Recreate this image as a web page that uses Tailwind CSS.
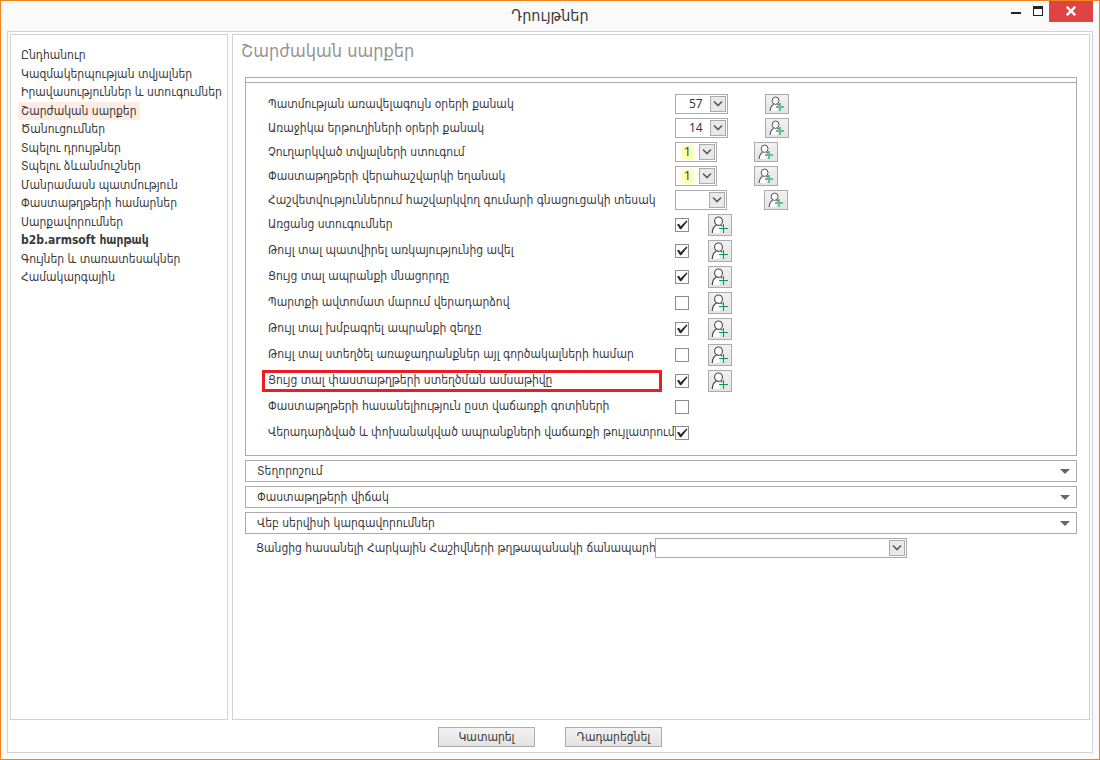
<!DOCTYPE html>
<html lang="hy">
<head>
<meta charset="utf-8">
<title>Դրույթներ</title>
<script src="https://cdn.jsdelivr.net/npm/@tailwindcss/browser@4"></script>
</head>
<body class="flex min-h-screen flex-col border border-[#f58220] bg-[#fafafa] font-['DejaVu_Sans_Condensed','DejaVu_Sans',sans-serif] text-[12px] leading-[18px] text-[#3a3a3a]">

<svg class="hidden" aria-hidden="true">
  <symbol id="user-add" viewBox="0 0 18 18">
    <path d="M1 17C1 14 2.500 10.800 5.400 9.200C7 10 8.200 10 9.800 9.200L12 11V13H9V17Z" fill="#fff"/>
    <ellipse cx="7.500" cy="5.200" rx="3.900" ry="4.200" fill="#fff" stroke="#4a4a4a" stroke-width="1.100"/>
    <path d="M1.300 17C1.300 13.500 2.600 10.700 5.400 9.100M9.600 9.100L11.400 10.200" fill="none" stroke="#4a4a4a" stroke-width="1.200"/>
    <path d="M12 8h1v4h4v1h-4v4h-1v-4h-4v-1h4z" fill="#00a046"/>
  </symbol>
  <symbol id="user-add-small" viewBox="0 0 16 16">
    <path d="M1 15C1 12 2.200 9.600 4.700 8.300C6 9 7.300 9 8.600 8.300L10.500 10V11H8V15Z" fill="#fff"/>
    <ellipse cx="6.600" cy="4.700" rx="3.400" ry="3.700" fill="#fff" stroke="#555" stroke-width="1"/>
    <path d="M1.200 15C1.200 12 2.300 9.600 4.700 8.200M8.500 8.200L10 9.200" fill="none" stroke="#555" stroke-width="1.100"/>
    <path d="M11 7v8M7 11h8" fill="none" stroke="#66c08c" stroke-width="2"/>
  </symbol>
  <symbol id="chevron" viewBox="0 0 14 14">
    <path d="M3 4.500L7 8.500L11 4.500" fill="none" stroke="#5c5c5c" stroke-width="1.600"/>
  </symbol>
  <symbol id="tick" viewBox="0 0 12 12">
    <path d="M1 5.500L3 4.800L4.600 7.200L10.800 1.200L11.400 2.400L5.200 10.300H4Z" fill="#2b2b2b"/>
  </symbol>
</svg>

<header class="relative flex h-[30px] items-center justify-center">
  <h1 class="text-[16px] leading-[20px]">Դրույթներ</h1>
  <div class="absolute -top-px right-[6px] flex items-start">
    <button aria-label="Minimize" class="flex h-[22px] w-[22px] items-center justify-center"><svg class="h-[10px] w-[10px]" viewBox="0 0 10 10"><path d="M0 6h10v2H0z" fill="#222"/></svg></button>
    <button aria-label="Maximize" class="flex h-[22px] w-[22px] items-center justify-center"><svg class="h-[10px] w-[10px]" viewBox="0 0 10 10"><path d="M0 0h10v10H0zM1 3v6h8V3z" fill="#222" fill-rule="evenodd"/></svg></button>
    <button aria-label="Close" class="flex h-[22px] w-[44px] items-center justify-center bg-[#e04343]"><svg class="h-[10px] w-[10px]" viewBox="0 0 10 10"><path d="M.800 .800L9.200 9.200M9.200 .800L.800 9.200" stroke="#fff" stroke-width="2.400"/></svg></button>
  </div>
</header>

<div class="mx-[6px] mb-[6px] flex grow flex-col border border-[#d2d2d2] bg-white">
  <div class="flex grow gap-1 px-[2px] pt-[2px]">

    <nav class="w-[218px] shrink-0 border border-[#d2d2d2] pt-[11px]">
      <ul class="grid h-[241px] auto-rows-fr pl-[7px]">
        <li><a href="#" class="inline-block whitespace-nowrap px-[3px]">Ընդհանուր</a></li>
        <li><a href="#" class="inline-block whitespace-nowrap px-[3px]">Կազմակերպության տվյալներ</a></li>
        <li><a href="#" class="inline-block whitespace-nowrap px-[3px]">Իրավասություններ և ստուգումներ</a></li>
        <li><a href="#" class="inline-block whitespace-nowrap bg-[#fcece3] px-[3px]">Շարժական սարքեր</a></li>
        <li><a href="#" class="inline-block whitespace-nowrap px-[3px]">Ծանուցումներ</a></li>
        <li><a href="#" class="inline-block whitespace-nowrap px-[3px]">Տպելու դրույթներ</a></li>
        <li><a href="#" class="inline-block whitespace-nowrap px-[3px]">Տպելու ձևանմուշներ</a></li>
        <li><a href="#" class="inline-block whitespace-nowrap px-[3px]">Մանրամասն պատմություն</a></li>
        <li><a href="#" class="inline-block whitespace-nowrap px-[3px]">Փաստաթղթերի համարներ</a></li>
        <li><a href="#" class="inline-block whitespace-nowrap px-[3px]">Սարքավորումներ</a></li>
        <li><a href="#" class="inline-block whitespace-nowrap px-[3px] font-bold">b2b.armsoft հարթակ</a></li>
        <li><a href="#" class="inline-block whitespace-nowrap px-[3px]">Գույներ և տառատեսակներ</a></li>
        <li><a href="#" class="inline-block whitespace-nowrap px-[3px]">Համակարգային</a></li>
      </ul>
    </nav>

    <main class="grow border border-[#d2d2d2]">
      <h2 class="px-2 pt-1 text-[18px] leading-6 text-[#949494]">Շարժական սարքեր</h2>

      <div class="mx-3 mt-[14px] flex flex-col gap-1">
        <section class="border border-[#ababab]">
          <div class="h-[5px] border-b border-[#ababab]"></div>
          <div class="pt-[9px] pb-[9px] pl-[22px]">
            <div class="flex h-6 items-center">
              <label for="s1" class="w-[407px]">Պատմության առավելագույն օրերի քանակ</label>
              <span class="relative flex"><select id="s1" class="h-5 w-[53px] appearance-none border border-[#ababab] bg-white pl-[13px] font-['Noto_Sans',sans-serif] text-[12px] leading-4"><option>57</option></select><svg class="pointer-events-none absolute top-[2px] right-[2px] h-4 w-4 border border-[#ababab] bg-[#e9e9e9]"><use href="#chevron"/></svg></span>
              <button aria-label="Ավելացնել օգտատեր" class="ml-[37px] flex h-5 w-6 items-center justify-center border border-[#ababab] bg-linear-to-b from-[#f2f2f2] to-[#e2e2e2]"><svg class="h-4 w-4"><use href="#user-add-small"/></svg></button>
            </div>
            <div class="flex h-6 items-center">
              <label for="s2" class="w-[407px]">Առաջիկա երթուղիների օրերի քանակ</label>
              <span class="relative flex"><select id="s2" class="h-5 w-[53px] appearance-none border border-[#ababab] bg-white pl-[13px] font-['Noto_Sans',sans-serif] text-[12px] leading-4"><option>14</option></select><svg class="pointer-events-none absolute top-[2px] right-[2px] h-4 w-4 border border-[#ababab] bg-[#e9e9e9]"><use href="#chevron"/></svg></span>
              <button aria-label="Ավելացնել օգտատեր" class="ml-[37px] flex h-5 w-6 items-center justify-center border border-[#ababab] bg-linear-to-b from-[#f2f2f2] to-[#e2e2e2]"><svg class="h-4 w-4"><use href="#user-add-small"/></svg></button>
            </div>
            <div class="flex h-6 items-center">
              <label for="s3" class="w-[407px]">Չուղարկված տվյալների ստուգում</label>
              <span class="relative flex"><select id="s3" class="h-5 w-[42px] appearance-none border border-[#ababab] bg-white bg-[linear-gradient(#ffffb0,#ffffb0)] bg-[length:11px_14px] bg-[position:6px_2px] bg-no-repeat pl-2 font-['Noto_Sans',sans-serif] text-[12px] leading-4"><option>1</option></select><svg class="pointer-events-none absolute top-[2px] right-[2px] h-4 w-4 border border-[#ababab] bg-[#e9e9e9]"><use href="#chevron"/></svg></span>
              <button aria-label="Ավելացնել օգտատեր" class="ml-[37px] flex h-5 w-6 items-center justify-center border border-[#ababab] bg-linear-to-b from-[#f2f2f2] to-[#e2e2e2]"><svg class="h-4 w-4"><use href="#user-add-small"/></svg></button>
            </div>
            <div class="flex h-6 items-center">
              <label for="s4" class="w-[407px]">Փաստաթղթերի վերահաշվարկի եղանակ</label>
              <span class="relative flex"><select id="s4" class="h-5 w-[42px] appearance-none border border-[#ababab] bg-white bg-[linear-gradient(#ffffb0,#ffffb0)] bg-[length:11px_14px] bg-[position:6px_2px] bg-no-repeat pl-2 font-['Noto_Sans',sans-serif] text-[12px] leading-4"><option>1</option></select><svg class="pointer-events-none absolute top-[2px] right-[2px] h-4 w-4 border border-[#ababab] bg-[#e9e9e9]"><use href="#chevron"/></svg></span>
              <button aria-label="Ավելացնել օգտատեր" class="ml-[37px] flex h-5 w-6 items-center justify-center border border-[#ababab] bg-linear-to-b from-[#f2f2f2] to-[#e2e2e2]"><svg class="h-4 w-4"><use href="#user-add-small"/></svg></button>
            </div>
            <div class="flex h-6 items-center">
              <label for="s5" class="w-[407px] whitespace-nowrap">Հաշվետվություններում հաշվարկվող գումարի գնացուցակի տեսակ</label>
              <span class="relative flex"><select id="s5" class="h-5 w-[52px] appearance-none border border-[#ababab] bg-white"><option></option></select><svg class="pointer-events-none absolute top-[2px] right-[2px] h-4 w-4 border border-[#ababab] bg-[#e9e9e9]"><use href="#chevron"/></svg></span>
              <button aria-label="Ավելացնել օգտատեր" class="ml-[37px] flex h-5 w-6 items-center justify-center border border-[#ababab] bg-linear-to-b from-[#f2f2f2] to-[#e2e2e2]"><svg class="h-4 w-4"><use href="#user-add-small"/></svg></button>
            </div>

            <div class="flex h-[26px] items-center">
              <label for="c1" class="w-[407px] pb-[2px]">Առցանց ստուգումներ</label>
              <span class="relative flex"><input id="c1" type="checkbox" checked class="peer h-[14px] w-[14px] appearance-none border border-[#8c8c8c] bg-white"><svg class="pointer-events-none absolute top-px left-px hidden h-3 w-3 peer-checked:block"><use href="#tick"/></svg></span>
              <button aria-label="Ավելացնել օգտատեր" class="ml-[19px] flex h-[22px] w-6 items-center justify-center border border-[#ababab] bg-linear-to-b from-[#f2f2f2] to-[#e2e2e2]"><svg class="h-[18px] w-[18px]"><use href="#user-add"/></svg></button>
            </div>
            <div class="flex h-[26px] items-center">
              <label for="c2" class="w-[407px] pb-[2px]">Թույլ տալ պատվիրել առկայությունից ավել</label>
              <span class="relative flex"><input id="c2" type="checkbox" checked class="peer h-[14px] w-[14px] appearance-none border border-[#8c8c8c] bg-white"><svg class="pointer-events-none absolute top-px left-px hidden h-3 w-3 peer-checked:block"><use href="#tick"/></svg></span>
              <button aria-label="Ավելացնել օգտատեր" class="ml-[19px] flex h-[22px] w-6 items-center justify-center border border-[#ababab] bg-linear-to-b from-[#f2f2f2] to-[#e2e2e2]"><svg class="h-[18px] w-[18px]"><use href="#user-add"/></svg></button>
            </div>
            <div class="flex h-[26px] items-center">
              <label for="c3" class="w-[407px] pb-[2px]">Ցույց տալ ապրանքի մնացորդը</label>
              <span class="relative flex"><input id="c3" type="checkbox" checked class="peer h-[14px] w-[14px] appearance-none border border-[#8c8c8c] bg-white"><svg class="pointer-events-none absolute top-px left-px hidden h-3 w-3 peer-checked:block"><use href="#tick"/></svg></span>
              <button aria-label="Ավելացնել օգտատեր" class="ml-[19px] flex h-[22px] w-6 items-center justify-center border border-[#ababab] bg-linear-to-b from-[#f2f2f2] to-[#e2e2e2]"><svg class="h-[18px] w-[18px]"><use href="#user-add"/></svg></button>
            </div>
            <div class="flex h-[26px] items-center">
              <label for="c4" class="w-[407px] pb-[2px]">Պարտքի ավտոմատ մարում վերադարձով</label>
              <span class="relative flex"><input id="c4" type="checkbox" class="peer h-[14px] w-[14px] appearance-none border border-[#8c8c8c] bg-white"><svg class="pointer-events-none absolute top-px left-px hidden h-3 w-3 peer-checked:block"><use href="#tick"/></svg></span>
              <button aria-label="Ավելացնել օգտատեր" class="ml-[19px] flex h-[22px] w-6 items-center justify-center border border-[#ababab] bg-linear-to-b from-[#f2f2f2] to-[#e2e2e2]"><svg class="h-[18px] w-[18px]"><use href="#user-add"/></svg></button>
            </div>
            <div class="flex h-[26px] items-center">
              <label for="c5" class="w-[407px] pb-[2px]">Թույլ տալ խմբագրել ապրանքի զեղչը</label>
              <span class="relative flex"><input id="c5" type="checkbox" checked class="peer h-[14px] w-[14px] appearance-none border border-[#8c8c8c] bg-white"><svg class="pointer-events-none absolute top-px left-px hidden h-3 w-3 peer-checked:block"><use href="#tick"/></svg></span>
              <button aria-label="Ավելացնել օգտատեր" class="ml-[19px] flex h-[22px] w-6 items-center justify-center border border-[#ababab] bg-linear-to-b from-[#f2f2f2] to-[#e2e2e2]"><svg class="h-[18px] w-[18px]"><use href="#user-add"/></svg></button>
            </div>
            <div class="flex h-[26px] items-center">
              <label for="c6" class="w-[407px] pb-[2px]">Թույլ տալ ստեղծել առաջադրանքներ այլ գործակալների համար</label>
              <span class="relative flex"><input id="c6" type="checkbox" class="peer h-[14px] w-[14px] appearance-none border border-[#8c8c8c] bg-white"><svg class="pointer-events-none absolute top-px left-px hidden h-3 w-3 peer-checked:block"><use href="#tick"/></svg></span>
              <button aria-label="Ավելացնել օգտատեր" class="ml-[19px] flex h-[22px] w-6 items-center justify-center border border-[#ababab] bg-linear-to-b from-[#f2f2f2] to-[#e2e2e2]"><svg class="h-[18px] w-[18px]"><use href="#user-add"/></svg></button>
            </div>
            <div class="flex h-[26px] items-center">
              <label for="c7" class="mr-[13px] -ml-[6px] h-[22px] w-[400px] border-3 border-[#ec1c24] pl-[3px] leading-[14px]">Ցույց տալ փաստաթղթերի ստեղծման ամսաթիվը</label>
              <span class="relative flex"><input id="c7" type="checkbox" checked class="peer h-[14px] w-[14px] appearance-none border border-[#8c8c8c] bg-white"><svg class="pointer-events-none absolute top-px left-px hidden h-3 w-3 peer-checked:block"><use href="#tick"/></svg></span>
              <button aria-label="Ավելացնել օգտատեր" class="ml-[19px] flex h-[22px] w-6 items-center justify-center border border-[#ababab] bg-linear-to-b from-[#f2f2f2] to-[#e2e2e2]"><svg class="h-[18px] w-[18px]"><use href="#user-add"/></svg></button>
            </div>
            <div class="flex h-[26px] items-center">
              <label for="c8" class="w-[407px] pb-[2px]">Փաստաթղթերի հասանելիություն ըստ վաճառքի գոտիների</label>
              <span class="relative flex"><input id="c8" type="checkbox" class="peer h-[14px] w-[14px] appearance-none border border-[#8c8c8c] bg-white"><svg class="pointer-events-none absolute top-px left-px hidden h-3 w-3 peer-checked:block"><use href="#tick"/></svg></span>
            </div>
            <div class="flex h-[26px] items-center">
              <label for="c9" class="w-[407px] whitespace-nowrap pb-[2px]">Վերադարձված և փոխանակված ապրանքների վաճառքի թույլատրում</label>
              <span class="relative flex"><input id="c9" type="checkbox" checked class="peer h-[14px] w-[14px] appearance-none border border-[#8c8c8c] bg-white"><svg class="pointer-events-none absolute top-px left-px hidden h-3 w-3 peer-checked:block"><use href="#tick"/></svg></span>
            </div>
          </div>
        </section>

        <button class="flex h-[22px] items-center justify-between border border-[#ababab] pr-[6px] pl-[11px] text-left">Տեղորոշում<svg class="h-[5px] w-[10px]" viewBox="0 0 10 5"><path d="M0 0h10L5 5z" fill="#666"/></svg></button>
        <button class="flex h-[22px] items-center justify-between border border-[#ababab] pr-[6px] pl-[11px] text-left">Փաստաթղթերի վիճակ<svg class="h-[5px] w-[10px]" viewBox="0 0 10 5"><path d="M0 0h10L5 5z" fill="#666"/></svg></button>
        <button class="flex h-[22px] items-center justify-between border border-[#ababab] pr-[6px] pl-[11px] text-left">Վեբ սերվիսի կարգավորումներ<svg class="h-[5px] w-[10px]" viewBox="0 0 10 5"><path d="M0 0h10L5 5z" fill="#666"/></svg></button>

        <div class="flex h-5 items-center pl-[11px]">
          <label for="path" class="w-[399px] whitespace-nowrap">Ցանցից հասանելի Հարկային Հաշիվների թղթապանակի ճանապարհ</label>
          <span class="relative flex"><select id="path" class="h-5 w-[252px] appearance-none border border-[#ababab] bg-white"><option></option></select><svg class="pointer-events-none absolute top-[2px] right-[2px] h-4 w-4 border border-[#ababab] bg-[#e9e9e9]"><use href="#chevron"/></svg></span>
        </div>
      </div>
    </main>
  </div>

  <footer class="flex h-8 items-center justify-center gap-[30px] pt-[2px]">
    <button class="h-5 w-[97px] border border-[#ababab] bg-linear-to-b from-[#f2f2f2] to-[#e2e2e2]">Կատարել</button>
    <button class="h-5 w-[97px] border border-[#ababab] bg-linear-to-b from-[#f2f2f2] to-[#e2e2e2]">Դադարեցնել</button>
  </footer>
</div>
</body>
</html>
